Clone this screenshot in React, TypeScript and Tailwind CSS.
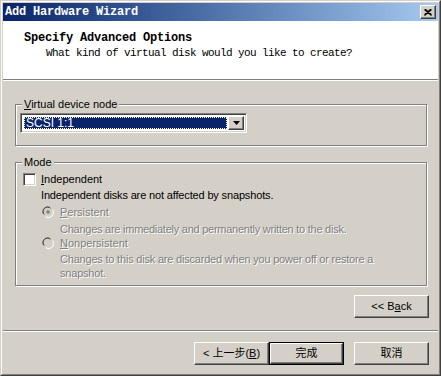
import React from 'react';

const mono = "font-['Liberation_Mono','DejaVu_Sans_Mono',monospace]";
const sans = "font-['Liberation_Sans','Noto_Sans_CJK_SC',sans-serif]";
const disabled = 'text-[#808080] [text-shadow:1px_1px_0_#ffffff]';

const raised =
  'border border-t-white border-l-white border-r-[#404040] border-b-[#404040] shadow-[inset_-1px_-1px_0_#808080,inset_1px_1px_0_#d4d0c8] bg-[#d4d0c8]';
const sunken =
  'border border-t-[#808080] border-l-[#808080] border-r-white border-b-white shadow-[inset_1px_1px_0_#404040,inset_-1px_-1px_0_#d4d0c8]';

const GroupBox = ({ label, className, children }: { label: React.ReactNode; className: string; children?: React.ReactNode }) => (
  <div className={`relative border border-[#808080] shadow-[inset_1px_1px_0_#fff,1px_1px_0_#fff] ${className}`}>
    <span className="absolute -top-[8px] left-[6px] bg-[#d4d0c8] px-[2px] leading-[14px]">{label}</span>
    {children}
  </div>
);

const Radio = ({ checked }: { checked?: boolean }) => (
  <svg width="12" height="12" viewBox="0 0 12 12" className="shrink-0">
    <path d="M8 1.2 A5.3 5.3 0 0 0 1.2 8" stroke="#808080" strokeWidth="1" fill="none" />
    <path d="M8.5 2.3 A4.3 4.3 0 0 0 2.3 8.5" stroke="#404040" strokeWidth="1" fill="none" />
    <path d="M3.5 10.8 A5.3 5.3 0 0 0 10.8 3.5" stroke="#ffffff" strokeWidth="1" fill="none" />
    <circle cx="6" cy="6" r="3.6" fill="#d4d0c8" />
    {checked && <circle cx="6" cy="6" r="1.8" fill="#808080" />}
  </svg>
);

const Button = ({ children, def, className = '' }: { children: React.ReactNode; def?: boolean; className?: string }) =>
  def ? (
    <div className={`w-[75px] h-[23px] border border-black ${className}`}>
      <div className={`${raised} w-full h-full flex items-center justify-center`}>{children}</div>
    </div>
  ) : (
    <div className={`${raised} w-[75px] h-[23px] flex items-center justify-center ${className}`}>{children}</div>
  );

export default function App() {
  return (
    <div className={`w-[441px] h-[376px] bg-[#d4d0c8] text-[11px] text-black ${sans}`}>
      <div className="w-full h-full border border-t-[#d4d0c8] border-l-[#d4d0c8] border-r-[#404040] border-b-[#404040]">
        <div className="w-full h-full border border-t-white border-l-white border-r-[#808080] border-b-[#808080] p-px flex flex-col">
          {/* title bar */}
          <div className="h-[18px] bg-linear-to-r from-[#0a246a] to-[#a6caf0] flex items-center pl-[2px] pr-[2px]">
            <span className={`${mono} text-white font-bold text-[12px] tracking-[-0.2px] leading-[14px]`}>Add Hardware Wizard</span>
            <div className={`${raised} ml-auto w-[16px] h-[14px] flex items-center justify-center`}>
              <svg width="8" height="7" viewBox="0 0 8 7">
                <path d="M0.5 0.5 L7.5 6.5 M1.5 0.5 L7.5 5.8 M7.5 0.5 L0.5 6.5 M6.5 0.5 L0.5 5.8" stroke="black" strokeWidth="1.2" />
              </svg>
            </div>
          </div>

          {/* header */}
          <div className={`h-[59px] bg-white pt-[10px] ${mono} border-b border-[#808080]`}>
            <div className="pl-[21px] h-[14px] leading-[14px] font-bold text-[12px] tracking-[-0.2px]">Specify Advanced Options</div>
            <div className="pl-[43px] mt-[1px] h-[14px] leading-[14px] text-[11px] tracking-[-0.6px]">What kind of virtual disk would you like to create?</div>
          </div>
          <div className="h-px bg-white" />

          {/* body */}
          <div className="flex-1 flex flex-col">
            <GroupBox
              className="mt-[23px] ml-[12px] w-[412px] h-[42px] pt-[8px] pl-[4px]"
              label={<><u>V</u>irtual device node</>}
            >
              <div className={`${sunken} bg-white w-[227px] h-[20px] flex items-center p-[2px]`}>
                <div className="flex-1 h-full pl-px pr-px py-px">
                  <div className="h-full bg-[#0a246a] border border-dotted border-[#fff8c0] text-white text-[12px] flex items-center pl-px leading-[13px]">SCSI 1:1</div>
                </div>
                <div className={`${raised} w-[16px] h-full flex items-center justify-center`}>
                  <svg width="7" height="4" viewBox="0 0 7 4">
                    <path d="M0 0 H7 L3.5 4 Z" fill="black" />
                  </svg>
                </div>
              </div>
            </GroupBox>

            <GroupBox className="mt-[16px] ml-[12px] w-[412px] h-[124px] pt-[9px]" label="Mode">
              <div className="flex items-center h-[14px] pl-[7px]">
                <div className={`${sunken} bg-white w-[13px] h-[13px] shrink-0`} />
                <span className="ml-[5px] leading-[14px]"><u>I</u>ndependent</span>
              </div>
              <div className="mt-[2px] h-[14px] leading-[14px] pl-[25px] tracking-[-0.15px]">Independent disks are not affected by snapshots.</div>
              <div className="mt-[3px] h-[14px] flex items-center pl-[26px]">
                <Radio checked />
                <span className={`ml-[6px] leading-[14px] ${disabled}`}><u>P</u>ersistent</span>
              </div>
              <div className={`mt-[3px] h-[14px] leading-[14px] pl-[44px] tracking-[-0.25px] ${disabled}`}>
                Changes are immediately and permanently written to the disk.
              </div>
              <div className="h-[14px] flex items-center pl-[26px]">
                <Radio />
                <span className={`ml-[6px] leading-[14px] ${disabled}`}><u>N</u>onpersistent</span>
              </div>
              <div className={`mt-[2px] leading-[14px] pl-[44px] tracking-[-0.2px] ${disabled}`}>
                Changes to this disk are discarded when you power off or restore a
                <br />
                snapshot.
              </div>
            </GroupBox>

            <div className="mt-[9px] flex justify-end pr-[9px]">
              <Button>&lt;&lt; B<u>a</u>ck</Button>
            </div>

            <div className="mt-[12px] h-px bg-[#808080]" />
            <div className="h-px bg-white" />

            <div className="mt-[10px] flex pr-[9px] justify-end">
              <Button>&lt; 上一步(<u>B</u>)</Button>
              <Button def>完成</Button>
              <Button className="ml-[10px]">取消</Button>
            </div>
          </div>
        </div>
      </div>
    </div>
  );
}
